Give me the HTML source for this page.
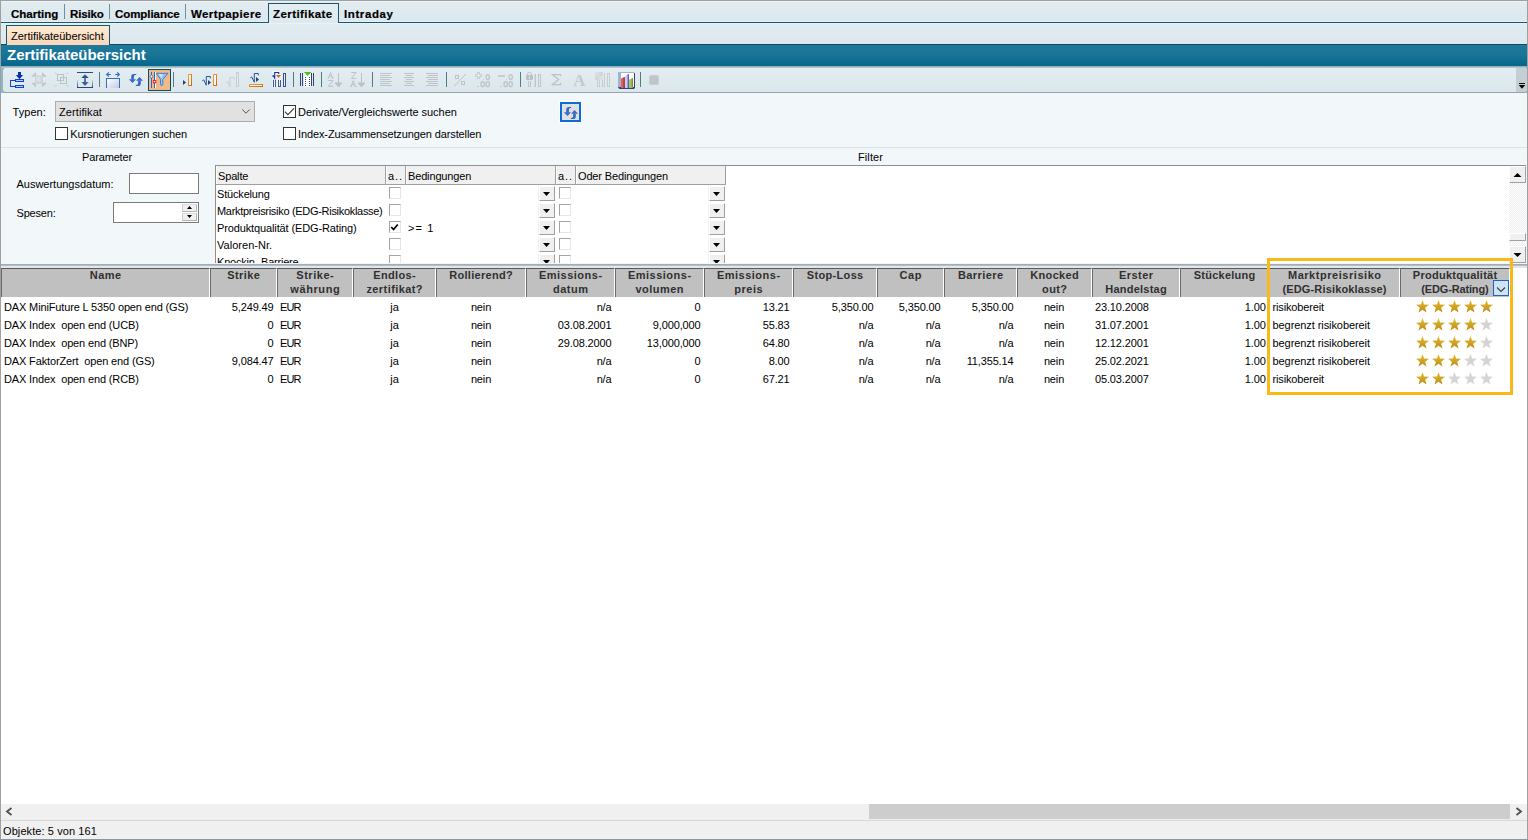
<!DOCTYPE html>
<html><head><meta charset="utf-8"><title>Zertifikateübersicht</title>
<style>
*{box-sizing:border-box;margin:0;padding:0}
html,body{width:1528px;height:840px;overflow:hidden;background:#fff}
body{font-family:"Liberation Sans",sans-serif;font-size:11px;color:#000;position:relative}
.a{position:absolute}
.t{position:absolute;white-space:pre;line-height:14px;height:14px}
/* top tab bar */
#tabbar{left:1px;top:1px;width:1526px;height:21px;background:linear-gradient(#e9f2f6 1px,#e2ecf1 1px,#dbe8ed 20px,#e9f2f6 20px)}
#tabline{left:1px;top:22px;width:1526px;height:1px;background:#17566e}
.tab{font-weight:bold;font-size:11.5px;top:7px;-webkit-text-stroke:.2px #000}
.tsep{width:1px;top:4px;height:15px;background:#6f8f9e}
#subbar{left:1px;top:23px;width:1526px;height:22px;background:linear-gradient(#e9f2f6 1px,#e1ecf1 1px,#dce8ed)}
#subtab{left:6px;top:25px;width:104px;height:20px;border:1px solid #17566e;border-bottom:none;background:linear-gradient(#fdecd4,#f8d6ba)}
#title{left:1px;top:45px;width:1526px;height:21px;background:linear-gradient(#20799a,#1a7596 45%,#05678b)}
#title .t{left:6px;top:1px;letter-spacing:-.03px;font-size:15px;font-weight:bold;color:#fff;line-height:18px;height:18px}
#tbtop{left:1px;top:66px;width:1526px;height:27px;background:linear-gradient(#a0a9ad 1px,#a3c9d6 1px,#a3c9d6 2px,#8bb7c6 2px)}
#toolbar{left:3px;top:68px;width:1524px;height:24px;background:linear-gradient(#e3edf2,#dbe7ec);border-radius:3px}
#tbbot{left:5px;top:92px;width:1520px;height:1px;background:#98a5ab}
#form{left:1px;top:93px;width:1526px;height:172px;background:#f2f7fa}
#hsep{left:1px;top:147px;width:1526px;height:1px;background:#dde2e5}
.ui{font-size:11px;letter-spacing:-.15px}
.cb{width:13px;height:13px;border:1px solid #333;background:#fff}
.fh{top:166px;height:19px;background:#f0f0f0;box-shadow:inset 1px 0 0 #fff;border-right:1px solid #a0a0a0;border-bottom:1px solid #a0a0a0;padding:3px 0 0 2px;white-space:pre;line-height:14px;overflow:hidden}
.fcb{width:12px;height:12px;background:#fff;border:1px solid #e6e6e6;border-top-color:#a3a3a3;border-left-color:#a3a3a3}
.fdd{width:16px;height:15px;background:#f0f0f0;border-right:1px solid #a0a0a0;border-bottom:1px solid #a0a0a0;border-top:1px solid #fff;border-left:1px solid #fff;box-shadow:-1px 0 0 #f0f0f0}
.fdd:after{content:"";position:absolute;left:3px;top:5px;width:7px;height:4px;background:#000;clip-path:polygon(0 0,100% 0,50% 100%)}
.sbb{width:17px;height:17px;background:#f0f0f0;border-right:1px solid #a0a0a0;border-bottom:1px solid #a0a0a0;border-top:1px solid #fff;border-left:1px solid #fff}
/* borders */
#bl{left:0;top:0;width:1px;height:840px;background:#a0a0a0}
#br{left:1527px;top:0;width:1px;height:840px;background:#a0a0a0}
#bt{left:0;top:0;width:1528px;height:1px;background:#a0a0a0}
#bb{left:0;top:839px;width:1528px;height:1px;background:#8a979e}
/* grid */
#grid{left:1px;top:268px;width:1526px;height:536px;background:#fff}
.hd{position:absolute;top:268px;height:29px;background:#c0c0c0;border-left:1px solid #6a6a6a;border-top:1px solid #5a5a5a;border-right:1px solid #fff;font-weight:bold;font-size:11px;color:#303030;text-align:center;line-height:14px;white-space:pre}.hd span{position:relative;top:-.8px}
.r{position:absolute;left:0;width:1528px;height:18px;font-size:11px;letter-spacing:-.14px}
.r span{position:absolute;top:2px;white-space:pre;line-height:14px}
#hscroll{left:1px;top:804px;width:1526px;height:16px;background:#f0f0f0}
#hthumb{left:869px;top:804px;width:641px;height:15px;background:#cdcdcd}
#status{left:1px;top:820px;width:1526px;height:19px;background:#f0f0f0;border-top:1px solid #d7d7d7}
</style></head><body>
<div class="a" id="tabbar"></div>
<div class="a" id="tabline"></div>
<div class="a" id="subbar"></div>
<div class="a" style="left:1px;top:44px;width:1526px;height:1px;background:#0e4c62"></div><div class="a" id="subtab"></div>
<div class="a" id="title"><span class="t">Zertifikateübersicht</span></div>
<div class="a" id="tbtop"></div>
<div class="a" id="toolbar"></div>
<div class="a" id="tbbot"></div>
<div class="a" id="form"></div>
<div class="a" id="hsep"></div>
<div class="a" id="grid"></div>
<div class="a" id="hscroll"></div>
<div class="a" id="hthumb"></div>
<div class="a" id="status"></div>
<div class="a tsep" style="left:64px"></div><div class="a tsep" style="left:109px"></div><div class="a tsep" style="left:185px"></div>
<div class="a" style="left:268px;top:3px;width:71px;height:20px;border:1px solid #17566e;border-bottom:none;background:linear-gradient(#e3edf2,#dde9ee)"></div>
<span class="t tab" style="left:11px">Charting</span>
<span class="t tab" style="left:70px;letter-spacing:-.17px">Risiko</span>
<span class="t tab" style="left:115px;letter-spacing:-.06px">Compliance</span>
<span class="t tab" style="left:191px;letter-spacing:.39px">Wertpapiere</span>
<span class="t tab" style="left:273px;letter-spacing:.43px">Zertifikate</span>
<span class="t tab" style="left:344px;letter-spacing:.6px">Intraday</span>
<span class="t ui" style="left:11px;top:29px;letter-spacing:-0.01px">Zertifikateübersicht</span>
<!--TABS-->
<svg class="a" style="left:0;top:66px" width="700" height="28" viewBox="0 66 700 28" shape-rendering="crispEdges">
<defs>
<linearGradient id="gU" x1="0" y1="0" x2="0" y2="1"><stop offset="0" stop-color="#c4d6ff"/><stop offset="1" stop-color="#2b4676"/></linearGradient>
<linearGradient id="gB" x1="0" y1="0" x2="1" y2="1"><stop offset="0" stop-color="#ffffff"/><stop offset="1" stop-color="#c6cae0"/></linearGradient>
<linearGradient id="gO" x1="0" y1="0" x2="1" y2="1"><stop offset="0" stop-color="#ffa53a"/><stop offset="1" stop-color="#c96300"/></linearGradient>
<linearGradient id="gA" x1="0" y1="0" x2="0" y2="1"><stop offset="0" stop-color="#3b6ea8"/><stop offset="1" stop-color="#24457a"/></linearGradient>
</defs>
<!-- separators -->
<g fill="#537b8b"><rect x="99" y="72" width="1" height="15"/><rect x="173" y="72" width="1" height="15"/><rect x="293" y="72" width="1" height="15"/><rect x="321" y="72" width="1" height="15"/><rect x="372" y="72" width="1" height="15"/><rect x="446" y="72" width="1" height="15"/><rect x="520" y="72" width="1" height="15"/><rect x="640" y="72" width="1" height="15"/></g>
<!-- 1 -->
<g fill="#0c2fa8"><rect x="18" y="72" width="3" height="4"/><polygon points="15.9,75 23.1,75 19.5,79.2" shape-rendering="geometricPrecision"/></g>
<g fill="#1440c4"><rect x="15" y="79" width="9" height="3"/><rect x="15" y="85" width="9" height="3"/><rect x="10" y="80" width="1" height="7"/><rect x="10" y="80" width="5" height="1"/><rect x="10" y="86" width="5" height="1"/></g>
<g fill="#a6d4ff"><rect x="16" y="80" width="7" height="1"/><rect x="16" y="86" width="7" height="1"/></g>
<!-- 2 disabled -->
<g fill="#c0c7cb" shape-rendering="geometricPrecision"><polygon points="31,76.8 36,72 36,76.8"/><polygon points="47,76.8 42,72 42,76.8"/><polygon points="31,82.7 36,87.5 36,82.7"/><polygon points="47,82.7 42,87.5 42,82.7"/><rect x="35" y="75.5" width="8" height="8.5" fill="#cfd5d8"/><rect x="36.5" y="77" width="4" height="4.5" fill="#dde2e5"/></g>
<!-- 3 disabled -->
<g fill="none" stroke="#bac2c6" stroke-width="1"><rect x="57.5" y="74.5" width="6" height="6"/><rect x="60.5" y="77.5" width="6" height="6"/></g>
<g stroke="#b8c0c4" stroke-width="1" shape-rendering="geometricPrecision"><line x1="55" y1="72.5" x2="56.5" y2="74"/><line x1="68" y1="72.5" x2="66.5" y2="74"/><line x1="55" y1="86.5" x2="56.5" y2="85"/><line x1="68" y1="86.5" x2="66.5" y2="85"/></g>
<!-- 4 -->
<rect x="77" y="72" width="16" height="1" fill="#2d4a7a"/>
<rect x="77" y="80" width="1" height="8" fill="url(#gU)"/><rect x="92" y="80" width="1" height="8" fill="url(#gU)"/><rect x="77" y="87" width="16" height="1" fill="#2b4676"/>
<g fill="url(#gA)" shape-rendering="geometricPrecision"><polygon points="81.3,78 85,74.2 88.7,78"/><rect x="84.2" y="77.5" width="1.6" height="5"/><polygon points="81.3,82 88.7,82 85,85.8"/></g>
<!-- 5 -->
<rect x="107" y="79" width="12" height="9" fill="url(#gB)"/><g fill="#2f6fc6"><rect x="106" y="78" width="14" height="1"/><rect x="106" y="78" width="1" height="10"/><rect x="119" y="78" width="1" height="10"/></g>
<g stroke="#2f6fc6" stroke-width="1.2" fill="none" shape-rendering="geometricPrecision"><path d="M108.8,72.4 L106.7,74.5 L108.8,76.6 M106.9,74.5 H110.8"/><path d="M117.2,72.4 L119.3,74.5 L117.2,76.6 M119.1,74.5 H115.2"/></g>
<!-- 6 refresh -->
<g id="refr" shape-rendering="geometricPrecision" fill="#3767c8"><path d="M136.2,74 h-2.4 c-1.7,0 -2.6,0.9 -2.6,2.6 v2.8 h2.7 v-2.4 c0,-1.3 0.5,-1.9 2.3,-1.9 z"/><polygon points="128.9,79.2 136,79.2 132.5,83.1"/><polygon points="136.1,80.8 143,80.8 139.5,76.9"/><path d="M135.8,86 h2.4 c1.7,0 2.6,-0.9 2.6,-2.6 v-2.8 h-2.7 v2.4 c0,1.3 -0.5,1.9 -2.3,1.9 z"/></g>
<!-- 7 pressed filter -->
<rect x="148.500" y="69.500" width="22" height="21" fill="#f0b98c" stroke="#0f4d62"/>
<rect x="151" y="72" width="1" height="16" fill="#2a68c8"/>
<rect x="154" y="72" width="1" height="16" fill="#2a68c8"/><rect x="155" y="72" width="1" height="16" fill="#fff"/>
<g shape-rendering="geometricPrecision"><circle cx="151.500" cy="76.500" r="1.400" fill="#fff" stroke="#2a68c8" stroke-width=".9"/>
<rect x="153.400" y="80.400" width="2.400" height="2.400" fill="#fff" stroke="#ee1c1c" stroke-width="1"/>
<polygon points="156.300,73.300 168,73.300 162.800,79.500 162.800,84.300 161.600,86 160.500,84.300 160.500,79.500" fill="#8fc8f3" stroke="#2a68c8" stroke-width=".8"/><polygon points="158.500,74 163,74 161.500,78" fill="#c6e4fb"/></g>
<!-- 8 -->
<polygon points="183,80 186,82.500 183,85" fill="#27406e" shape-rendering="geometricPrecision"/>
<g id="orect"><rect x="188" y="74" width="4" height="12" fill="url(#gO)"/><rect x="189" y="75" width="2" height="10" fill="#f4f6f8"/></g>
<!-- 9 -->
<path d="M202.300,80.800 l1.400,-.9 l2.600,5.300 V76.500 h4 v1.800" fill="none" stroke="#1d4c96" stroke-width=".95" shape-rendering="geometricPrecision"/>
<polygon points="208,80 211,82.500 208,85" fill="#27406e" shape-rendering="geometricPrecision"/>
<use href="#orect" x="25"/>
<!-- 10 disabled -->
<path d="M226.300,82.300 l1.400,-.8 l2.300,5 V77.500 h4.500 v2" fill="none" stroke="#c7cdd0" stroke-width="1" shape-rendering="geometricPrecision"/>
<rect x="236.500" y="72.500" width="2" height="14" fill="#e6ebee" stroke="#c5cbce"/>
<!-- 11 -->
<path d="M250.300,77.800 l1.400,-.9 l2.600,5.300 V73.500 h4 v1.800" fill="none" stroke="#1d4c96" stroke-width=".95" shape-rendering="geometricPrecision"/>
<polygon points="256,77 259,79.500 256,82" fill="#27406e" shape-rendering="geometricPrecision"/>
<rect x="249" y="84" width="14" height="3" fill="url(#gO)"/><rect x="250" y="85" width="12" height="1" fill="#fdf3e6"/>
<!-- 12 -->
<rect x="272" y="71" width="10" height="16" fill="#eef2f6"/>
<path d="M272.300,76.300 l1,-.6 l1.400,2.400 V72.500 h4 v1.500" fill="none" stroke="#1735a8" stroke-width="1.100" shape-rendering="geometricPrecision"/>
<polygon points="276,75 281,75 278.500,78" fill="#d96a10" shape-rendering="geometricPrecision"/>
<g fill="#3f5f9a"><rect x="273" y="80" width="1" height="7"/><rect x="275" y="80" width="1" height="7"/><rect x="278" y="80" width="1" height="7"/><rect x="280" y="80" width="1" height="7"/><rect x="278" y="86" width="3" height="1"/></g>
<rect x="283.500" y="73.500" width="2" height="13" fill="#eef2f8" stroke="#3a4f86"/>
<!-- 13 -->
<rect x="304" y="73" width="7" height="14" fill="#fff"/>
<g fill="#2c4376"><rect x="300" y="73" width="1" height="13"/><rect x="302" y="73" width="1" height="13"/><rect x="311" y="73" width="1" height="13"/><rect x="313" y="73" width="1" height="13"/>
<rect x="305" y="77" width="1" height="1"/><rect x="305" y="79" width="1" height="1"/><rect x="305" y="81" width="1" height="1"/><rect x="305" y="83" width="1" height="1"/><rect x="305" y="85" width="1" height="1"/><rect x="309" y="77" width="1" height="1"/><rect x="309" y="79" width="1" height="1"/><rect x="309" y="81" width="1" height="1"/><rect x="309" y="83" width="1" height="1"/><rect x="309" y="85" width="1" height="1"/></g>
<polygon points="304,72 311.500,72 307.700,76" fill="#4cc417" shape-rendering="geometricPrecision"/>
<!-- 14 AZ -->
<g fill="none" stroke="#bac2c6" stroke-width="1" shape-rendering="geometricPrecision"><path d="M327.500,78 h2 M331.500,78 h2.200 M328.500,78 l2.100,-5.500 l2.100,5.500 M329.300,76.200 h2.600"/><path d="M328.300,80.500 h4.800 l-4.800,5.800 h4.800"/><path d="M338.500,73 v10"/><polygon points="335.200,83 341.800,83 338.500,87" fill="#bac2c6"/></g>
<!-- 15 ZA -->
<g fill="none" stroke="#bac2c6" stroke-width="1" shape-rendering="geometricPrecision"><path d="M351.300,72.600 h4.800 l-4.800,5.800 h4.800"/><path d="M350.200,86.300 h2 M354.200,86.300 h2.200 M351.200,86.300 l2.100,-5.500 l2.100,5.500 M352,84.500 h2.600"/><path d="M361.500,73 v10"/><polygon points="358.200,83 364.800,83 361.500,87" fill="#bac2c6"/></g>
<!-- 16-18 align -->
<g fill="#bcc4c8"><rect x="380" y="73" width="12" height="1"/><rect x="380" y="75" width="10" height="1"/><rect x="380" y="77" width="12" height="1"/><rect x="380" y="79" width="10" height="1"/><rect x="380" y="81" width="12" height="1"/><rect x="380" y="83" width="10" height="1"/><rect x="380" y="85" width="12" height="1"/>
<rect x="404" y="73" width="10" height="1"/><rect x="406" y="75" width="6" height="1"/><rect x="404" y="77" width="10" height="1"/><rect x="406" y="79" width="6" height="1"/><rect x="404" y="81" width="10" height="1"/><rect x="406" y="83" width="6" height="1"/><rect x="404" y="85" width="10" height="1"/>
<rect x="426" y="73" width="12" height="1"/><rect x="428" y="75" width="10" height="1"/><rect x="426" y="77" width="12" height="1"/><rect x="428" y="79" width="10" height="1"/><rect x="426" y="81" width="12" height="1"/><rect x="428" y="83" width="10" height="1"/><rect x="426" y="85" width="12" height="1"/></g>
<!-- 19 % -->
<g fill="none" stroke="#bac2c6" stroke-width="1"><rect x="455.500" y="75.500" width="3" height="3"/><rect x="461.500" y="81.500" width="3" height="3"/><line x1="466" y1="74" x2="454.300" y2="86" shape-rendering="geometricPrecision"/></g>
<!-- 20/21 decimals -->
<g fill="none" stroke="#c3cacd" stroke-width="1" shape-rendering="geometricPrecision"><path d="M477.5,72.5 h2 v2 h2 v2 h-2 v2 h-2 v-2 h-2 v-2 h2z"/></g>
<rect x="498" y="75" width="7" height="2" fill="#c6cdd0"/>
<g fill="none" stroke="#c0c7cb" stroke-width="1.45" shape-rendering="geometricPrecision"><ellipse cx="487.7" cy="77" rx="1.7" ry="2.4"/><ellipse cx="482.7" cy="84.2" rx="1.7" ry="2.4"/><ellipse cx="487.7" cy="84.2" rx="1.7" ry="2.4"/><ellipse cx="510.7" cy="77" rx="1.7" ry="2.4"/><ellipse cx="505.7" cy="84.2" rx="1.7" ry="2.4"/><ellipse cx="510.7" cy="84.2" rx="1.7" ry="2.4"/></g><g fill="#c3cacd"><rect x="482.5" y="78.5" width="1.5" height="1.5"/><rect x="477.3" y="85.7" width="1.5" height="1.5"/><rect x="505.5" y="78.5" width="1.5" height="1.5"/><rect x="500.3" y="85.7" width="1.5" height="1.5"/></g>
<!-- 22 lock cols -->
<g fill="none" stroke="#c0c7cb" stroke-width="1"><path d="M527.6,75.5 v-1.6 q0,-1.7 1.9,-1.7 q1.900,0 1.9,1.7 v1.6" shape-rendering="geometricPrecision"/><rect x="526" y="75" width="7" height="5" rx="1.300" fill="#b8c0c4" stroke="none" shape-rendering="geometricPrecision"/><rect x="529" y="76" width="1" height="3" fill="#dde5ea" stroke="none"/><path d="M528.5,81 v5.5 h2 v-5.5"/><path d="M534.5,74 v12.5" stroke="#d4dbdf"/><path d="M535.5,74 v12.5 M534,86.5 h2"/><rect x="538.5" y="74.5" width="2" height="12" fill="#e0e8ec"/></g>
<!-- 23 sigma -->
<path d="M560.6,76.3 V74.5 H552.4 l6.2,5 l-6.200,5 H560.6 v-1.8" fill="none" stroke="#bac2c6" stroke-width="1.25" shape-rendering="geometricPrecision"/>
<!-- 24 A -->
<text x="573.300" y="86" font-family="Liberation Serif" font-weight="bold" font-size="17" fill="#c3cacd" shape-rendering="geometricPrecision">A</text>
<!-- 25 -->
<rect x="595" y="72" width="8" height="8" fill="#d0d6d9"/><rect x="595" y="72" width="4" height="4" fill="#d9dee1"/><rect x="599" y="76" width="4" height="4" fill="#dbe0e3"/>
<g fill="none" stroke="#c6cdd0" stroke-width="1"><path d="M597.5,80 v6.5 h2 v-6.5"/><path d="M602.5,80 v6.5 h2 v-13.5"/><rect x="607.5" y="73.5" width="2" height="13" fill="#e4e9ec"/></g>
<!-- 26 chart -->
<rect x="621" y="73" width="13" height="15" fill="#fff"/>
<rect x="618" y="72" width="3" height="16" fill="#a5b2cd"/><rect x="618" y="72" width="16" height="1" fill="#a5b2cd"/><rect x="634" y="73" width="1" height="15" fill="#2c447a"/>
<polygon points="618,87 635,87 634.2,89 619.4,89" fill="#2c447a" shape-rendering="geometricPrecision"/>
<g shape-rendering="geometricPrecision"><polygon points="621,78.6 624.7,77 624.7,88 621,88" fill="#d96262"/><polygon points="623.5,77.5 624.8,76.9 624.8,88 623.5,88" fill="#ad2a2a"/>
<polygon points="625.1,75.8 628.8,74 628.8,88 625.1,88" fill="#c6cef1"/><polygon points="627.6,74.6 628.900,73.9 628.9,88 627.6,88" fill="#4659c6"/>
<polygon points="629.1,79.7 632.9,78 632.9,88 629.1,88" fill="#aac254"/><polygon points="631.7,78.5 633,77.9 633,88 631.7,88" fill="#7b962a"/>
</g>
<!-- 27 -->
<rect x="649.3" y="75.3" width="9.4" height="9.4" fill="#bec6c9" rx="1.2" shape-rendering="geometricPrecision" style="filter:blur(.75px)"/>
</svg>
<div class="a" style="left:1516px;top:68px;width:11px;height:24px;background:#c3cfd4;border-radius:0 4px 4px 0"></div>
<svg class="a" style="left:1518px;top:82px" width="8" height="8" viewBox="0 0 8 8"><rect x="1" y="1" width="6" height="1" fill="#000" shape-rendering="crispEdges"/><polygon points="0.8,3 7.2,3 4,6.8" fill="#000"/></svg>
<!--TOOLBAR-->
<span class="t ui" style="left:12.500px;top:105px;letter-spacing:0.062px">Typen:</span>
<div class="a" style="left:55px;top:101px;width:200px;height:21px;background:#e1e1e1;border:1px solid #adadad"></div>
<span class="t ui" style="left:59px;top:105px;letter-spacing:0.08px">Zertifikat</span>
<svg class="a" style="left:241px;top:108px" width="10" height="7" viewBox="0 0 10 7"><path d="M1.3,1.5 L5,5.2 L8.7,1.5" fill="none" stroke="#505050" stroke-width="1"/></svg>
<div class="a cb" style="left:55px;top:127px"></div>
<span class="t ui" style="left:70.300px;top:127px;letter-spacing:-0.120px">Kursnotierungen suchen</span>
<div class="a cb" style="left:283px;top:105px"></div>
<svg class="a" style="left:283px;top:105px" width="13" height="13" viewBox="0 0 13 13"><path d="M1.9,6.6 L4.9,9.6 L11,3.3" fill="none" stroke="#3a3a3a" stroke-width="1.1"/></svg>
<span class="t ui" style="left:298px;top:105px;letter-spacing:-0.045px">Derivate/Vergleichswerte suchen</span>
<div class="a cb" style="left:283px;top:127px"></div>
<span class="t ui" style="left:298px;top:127px;letter-spacing:-0.112px">Index-Zusammensetzungen darstellen</span>
<div class="a" style="left:560px;top:102px;width:21px;height:20px;border:2px solid #0c6dd6;background:#e1e1e1;box-shadow:0 0 0 1px #fbfdfe"></div>
<svg class="a" style="left:562px;top:105px" width="17" height="16" viewBox="127 72 17 16"><g fill="#3767c8"><path d="M136.2,74 h-2.4 c-1.7,0 -2.6,0.9 -2.6,2.6 v2.8 h2.7 v-2.4 c0,-1.3 0.5,-1.9 2.3,-1.9 z"/><polygon points="128.9,79.2 136,79.2 132.5,83.1"/><polygon points="136.1,80.8 143,80.8 139.5,76.9"/><path d="M135.8,86 h2.4 c1.7,0 2.6,-0.9 2.6,-2.6 v-2.8 h-2.7 v2.4 c0,1.3 -0.5,1.9 -2.3,1.9 z"/></g></svg>
<span class="t ui" style="left:82px;top:150px;letter-spacing:-0.151px">Parameter</span>
<span class="t ui" style="left:858px;top:150px;letter-spacing:0.1px">Filter</span>
<span class="t ui" style="left:16.500px;top:177px;letter-spacing:-0.013px">Auswertungsdatum:</span>
<div class="a" style="left:129px;top:173px;width:70px;height:21px;background:#fff;border:1px solid #7a7a7a"></div>
<span class="t ui" style="left:16.500px;top:206px;letter-spacing:-0.197px">Spesen:</span>
<div class="a" style="left:113px;top:202px;width:86px;height:21px;background:#fff;border:1px solid #7a7a7a"></div>
<div class="a" style="left:182px;top:204px;width:15px;height:8px;background:#f0f0f0;border:1px solid #b4b4b4;border-top-color:#dcdcdc;border-left-color:#d0d0d0"></div>
<div class="a" style="left:182px;top:213px;width:15px;height:8px;background:#f0f0f0;border:1px solid #b4b4b4;border-top-color:#dcdcdc;border-left-color:#d0d0d0"></div>
<svg class="a" style="left:186px;top:206px" width="7" height="14" viewBox="0 0 7 14"><polygon points="1,3 6,3 3.5,0" fill="#000"/><polygon points="1,9 6,9 3.5,12" fill="#000"/></svg>
<!--FORM-->
<div class="a" style="left:0;top:0;width:1528px;height:263px;overflow:hidden">
<div class="a" style="left:215px;top:165px;width:1311px;height:1px;background:#8f8f8f"></div><div class="a" style="left:215px;top:166px;width:1294px;height:97px;background:#fff;border-left:1px solid #8f8f8f"></div>
<div class="a fh" style="left:216px;width:170px"><span class="ui">Spalte</span></div>
<div class="a fh" style="left:386px;width:20px"><span class="ui" style="letter-spacing:.9px">a..</span></div>
<div class="a fh" style="left:406px;width:150px"><span class="ui">Bedingungen</span></div>
<div class="a fh" style="left:556px;width:20px"><span class="ui" style="letter-spacing:.9px">a..</span></div>
<div class="a fh" style="left:576px;width:150px"><span class="ui">Oder Bedingungen</span></div>
<span class="t ui" style="left:217px;top:187px;letter-spacing:-0.174px">Stückelung</span>
<div class="a fcb" style="left:389px;top:187px"></div><div class="a fcb" style="left:559px;top:187px"></div>
<div class="a fdd" style="left:539px;top:186px"></div><div class="a fdd" style="left:709px;top:186px"></div>
<span class="t ui" style="left:217px;top:204px;letter-spacing:-0.301px">Marktpreisrisiko (EDG-Risikoklasse)</span>
<div class="a fcb" style="left:389px;top:204px"></div><div class="a fcb" style="left:559px;top:204px"></div>
<div class="a fdd" style="left:539px;top:203px"></div><div class="a fdd" style="left:709px;top:203px"></div>
<span class="t ui" style="left:217px;top:221px;letter-spacing:-0.127px">Produktqualität (EDG-Rating)</span>
<div class="a fcb" style="left:389px;top:221px"></div><div class="a fcb" style="left:559px;top:221px"></div>
<div class="a fdd" style="left:539px;top:220px"></div><div class="a fdd" style="left:709px;top:220px"></div>
<span class="t ui" style="left:217px;top:238px;letter-spacing:0.034px">Valoren-Nr.</span>
<div class="a fcb" style="left:389px;top:238px"></div><div class="a fcb" style="left:559px;top:238px"></div>
<div class="a fdd" style="left:539px;top:237px"></div><div class="a fdd" style="left:709px;top:237px"></div>
<span class="t ui" style="left:217px;top:255px;letter-spacing:-0.205px">Knockin- Barriere</span>
<div class="a fcb" style="left:389px;top:255px"></div><div class="a fcb" style="left:559px;top:255px"></div>
<div class="a fdd" style="left:539px;top:254px"></div><div class="a fdd" style="left:709px;top:254px"></div>
<svg class="a" style="left:389px;top:222px" width="11" height="11" viewBox="0 0 11 11"><path d="M2.300,5 L4.500,7.500 L8.800,2.500" fill="none" stroke="#000" stroke-width="1.700"/></svg>
<span class="t ui" style="left:408px;top:221px;letter-spacing:1.1px">&gt;= 1</span>
</div>
<div class="a" style="left:1px;top:263px;width:1526px;height:1px;background:#f4f7f9"></div><div class="a" style="left:1px;top:264px;width:1526px;height:2px;background:linear-gradient(#9ea5a9,#bcc5ca)"></div><div class="a" style="left:1px;top:266px;width:1526px;height:2px;background:#dfe8ee"></div>
<div class="a" style="left:1509px;top:166px;width:17px;height:97px;background:#f0f0f0;background-image:repeating-conic-gradient(#fff 0 25%,#ececec 0 50%);background-size:2px 2px"></div>
<div class="a sbb" style="left:1509px;top:166px"></div><div class="a sbb" style="left:1509px;top:246px"></div><div class="a sbb" style="left:1509px;top:233px;height:8px"></div>
<svg class="a" style="left:1513px;top:172px" width="9" height="6" viewBox="0 0 9 6"><polygon points="0.500,5 8.500,5 4.500,1" fill="#000"/></svg>
<svg class="a" style="left:1513px;top:252px" width="9" height="6" viewBox="0 0 9 6"><polygon points="0.500,1 8.500,1 4.500,5" fill="#000"/></svg>
<!--FILTER-->
<div class="hd" style="left:1px;width:209px"><span style="letter-spacing:0.510px;margin-right:-0.510px">Name</span><br></div>
<div class="hd" style="left:210px;width:67px"><span style="letter-spacing:0.424px;margin-right:-0.424px">Strike</span><br></div>
<div class="hd" style="left:277px;width:76px"><span style="letter-spacing:0.542px;margin-right:-0.542px">Strike-</span><br><span style="letter-spacing:0.593px;margin-right:-0.593px">währung</span><br></div>
<div class="hd" style="left:353px;width:83px"><span style="letter-spacing:0.377px;margin-right:-0.377px">Endlos-</span><br><span style="letter-spacing:0.423px;margin-right:-0.423px">zertifikat?</span><br></div>
<div class="hd" style="left:436px;width:90px"><span style="letter-spacing:0.298px;margin-right:-0.298px">Rollierend?</span><br></div>
<div class="hd" style="left:526px;width:89px"><span style="letter-spacing:0.501px;margin-right:-0.501px">Emissions-</span><br><span style="letter-spacing:0.550px;margin-right:-0.550px">datum</span><br></div>
<div class="hd" style="left:615px;width:89px"><span style="letter-spacing:0.501px;margin-right:-0.501px">Emissions-</span><br><span style="letter-spacing:0.462px;margin-right:-0.462px">volumen</span><br></div>
<div class="hd" style="left:704px;width:89px"><span style="letter-spacing:0.501px;margin-right:-0.501px">Emissions-</span><br><span style="letter-spacing:0.550px;margin-right:-0.550px">preis</span><br></div>
<div class="hd" style="left:793px;width:84px"><span style="letter-spacing:0.340px;margin-right:-0.340px">Stop-Loss</span><br></div>
<div class="hd" style="left:877px;width:67px"><span style="letter-spacing:0.660px;margin-right:-0.660px">Cap</span><br></div>
<div class="hd" style="left:944px;width:73px"><span style="letter-spacing:0.429px;margin-right:-0.429px">Barriere</span><br></div>
<div class="hd" style="left:1017px;width:75px"><span style="letter-spacing:0.322px;margin-right:-0.322px">Knocked</span><br><span style="letter-spacing:0.323px;margin-right:-0.323px">out?</span><br></div>
<div class="hd" style="left:1092px;width:88px"><span style="letter-spacing:0.480px;margin-right:-0.480px">Erster</span><br><span style="letter-spacing:0.233px;margin-right:-0.233px">Handelstag</span><br></div>
<div class="hd" style="left:1180px;width:89px"><span style="letter-spacing:0.256px;margin-right:-0.256px">Stückelung</span><br></div>
<div class="hd" style="left:1269px;width:131px"><span style="letter-spacing:0.541px;margin-right:-0.541px">Marktpreisrisiko</span><br><span style="letter-spacing:0.154px;margin-right:-0.154px">(EDG-Risikoklasse)</span><br></div>
<div class="hd" style="left:1400px;width:110px"><span style="letter-spacing:0.259px;margin-right:-0.259px">Produktqualität</span><br><span style="letter-spacing:-0.159px;margin-right:0.159px">(EDG-Rating)</span><br></div>
<div class="a" style="left:1493px;top:280px;width:16px;height:16px;background:#cde4f7;border:1px solid #1a66b8"></div>
<svg class="a" style="left:1496px;top:286px" width="10" height="7" viewBox="0 0 10 7"><path d="M1,1.500 L5,5.500 L9,1.500" fill="none" stroke="#404040" stroke-width="1.100"/></svg>
<!--HEADER-->
<svg width="0" height="0" style="position:absolute"><defs><linearGradient id="gs" x1="0" y1="0" x2="0" y2="1"><stop offset="0" stop-color="#e9bf3c"/><stop offset="1" stop-color="#bb8a0e"/></linearGradient><path id="st" d="M6.5,0 L8.1,4.6 L13,4.8 L9.1,7.8 L10.5,12.5 L6.5,9.7 L2.5,12.5 L3.9,7.8 L0,4.8 L4.9,4.6 Z"/></defs></svg>
<div class="r" style="top:298px"><span style="left:4px">DAX MiniFuture L 5350 open end (GS)</span><span style="right:1254.5px">5,249.49</span><span style="left:280px;letter-spacing:-.85px">EUR</span><span style="left:394.5px;transform:translateX(-50%)">ja</span><span style="left:481px;transform:translateX(-50%)">nein</span><span style="right:916.5px">n/a</span><span style="right:827.5px">0</span><span style="right:738.5px">13.21</span><span style="right:654.5px">5,350.00</span><span style="right:587.5px">5,350.00</span><span style="right:514.5px">5,350.00</span><span style="left:1054px;transform:translateX(-50%)">nein</span><span style="left:1095px">23.10.2008</span><span style="right:262.3px">1.00</span><span style="left:1272.500px;letter-spacing:-.14px">risikobereit</span></div>
<svg class="a" style="left:1416px;top:300px" width="78" height="14" viewBox="0 0 78 14"><use href="#st" x="0" fill="url(#gs)"/><use href="#st" x="16" fill="url(#gs)"/><use href="#st" x="32" fill="url(#gs)"/><use href="#st" x="48" fill="url(#gs)"/><use href="#st" x="64" fill="url(#gs)"/></svg>
<div class="r" style="top:316px"><span style="left:4px">DAX Index  open end (UCB)</span><span style="right:1254.5px">0</span><span style="left:280px;letter-spacing:-.85px">EUR</span><span style="left:394.5px;transform:translateX(-50%)">ja</span><span style="left:481px;transform:translateX(-50%)">nein</span><span style="right:916.5px">03.08.2001</span><span style="right:827.5px">9,000,000</span><span style="right:738.5px">55.83</span><span style="right:654.5px">n/a</span><span style="right:587.5px">n/a</span><span style="right:514.5px">n/a</span><span style="left:1054px;transform:translateX(-50%)">nein</span><span style="left:1095px">31.07.2001</span><span style="right:262.3px">1.00</span><span style="left:1272.500px;letter-spacing:-.075px">begrenzt risikobereit</span></div>
<svg class="a" style="left:1416px;top:318px" width="78" height="14" viewBox="0 0 78 14"><use href="#st" x="0" fill="url(#gs)"/><use href="#st" x="16" fill="url(#gs)"/><use href="#st" x="32" fill="url(#gs)"/><use href="#st" x="48" fill="url(#gs)"/><use href="#st" x="64" fill="#d4d4d4"/></svg>
<div class="r" style="top:334px"><span style="left:4px">DAX Index  open end (BNP)</span><span style="right:1254.5px">0</span><span style="left:280px;letter-spacing:-.85px">EUR</span><span style="left:394.5px;transform:translateX(-50%)">ja</span><span style="left:481px;transform:translateX(-50%)">nein</span><span style="right:916.5px">29.08.2000</span><span style="right:827.5px">13,000,000</span><span style="right:738.5px">64.80</span><span style="right:654.5px">n/a</span><span style="right:587.5px">n/a</span><span style="right:514.5px">n/a</span><span style="left:1054px;transform:translateX(-50%)">nein</span><span style="left:1095px">12.12.2001</span><span style="right:262.3px">1.00</span><span style="left:1272.500px;letter-spacing:-.075px">begrenzt risikobereit</span></div>
<svg class="a" style="left:1416px;top:336px" width="78" height="14" viewBox="0 0 78 14"><use href="#st" x="0" fill="url(#gs)"/><use href="#st" x="16" fill="url(#gs)"/><use href="#st" x="32" fill="url(#gs)"/><use href="#st" x="48" fill="url(#gs)"/><use href="#st" x="64" fill="#d4d4d4"/></svg>
<div class="r" style="top:352px"><span style="left:4px">DAX FaktorZert  open end (GS)</span><span style="right:1254.5px">9,084.47</span><span style="left:280px;letter-spacing:-.85px">EUR</span><span style="left:394.5px;transform:translateX(-50%)">ja</span><span style="left:481px;transform:translateX(-50%)">nein</span><span style="right:916.5px">n/a</span><span style="right:827.5px">0</span><span style="right:738.5px">8.00</span><span style="right:654.5px">n/a</span><span style="right:587.5px">n/a</span><span style="right:514.5px">11,355.14</span><span style="left:1054px;transform:translateX(-50%)">nein</span><span style="left:1095px">25.02.2021</span><span style="right:262.3px">1.00</span><span style="left:1272.500px;letter-spacing:-.075px">begrenzt risikobereit</span></div>
<svg class="a" style="left:1416px;top:354px" width="78" height="14" viewBox="0 0 78 14"><use href="#st" x="0" fill="url(#gs)"/><use href="#st" x="16" fill="url(#gs)"/><use href="#st" x="32" fill="url(#gs)"/><use href="#st" x="48" fill="#d4d4d4"/><use href="#st" x="64" fill="#d4d4d4"/></svg>
<div class="r" style="top:370px"><span style="left:4px">DAX Index  open end (RCB)</span><span style="right:1254.5px">0</span><span style="left:280px;letter-spacing:-.85px">EUR</span><span style="left:394.5px;transform:translateX(-50%)">ja</span><span style="left:481px;transform:translateX(-50%)">nein</span><span style="right:916.5px">n/a</span><span style="right:827.5px">0</span><span style="right:738.5px">67.21</span><span style="right:654.5px">n/a</span><span style="right:587.5px">n/a</span><span style="right:514.5px">n/a</span><span style="left:1054px;transform:translateX(-50%)">nein</span><span style="left:1095px">05.03.2007</span><span style="right:262.3px">1.00</span><span style="left:1272.500px;letter-spacing:-.14px">risikobereit</span></div>
<svg class="a" style="left:1416px;top:372px" width="78" height="14" viewBox="0 0 78 14"><use href="#st" x="0" fill="url(#gs)"/><use href="#st" x="16" fill="url(#gs)"/><use href="#st" x="32" fill="#d4d4d4"/><use href="#st" x="48" fill="#d4d4d4"/><use href="#st" x="64" fill="#d4d4d4"/></svg>
<div class="a" style="left:1267px;top:258px;width:246px;height:137px;border:3px solid #fbb917"></div>
<!--ROWS-->
<svg class="a" style="left:5px;top:807px" width="8" height="9" viewBox="0 0 8 9"><path d="M6.500,1 L2,4.500 L6.500,8" fill="none" stroke="#505050" stroke-width="1.800"/></svg>
<svg class="a" style="left:1515px;top:807px" width="8" height="9" viewBox="0 0 8 9"><path d="M1.500,1 L6,4.500 L1.500,8" fill="none" stroke="#505050" stroke-width="1.800"/></svg>
<span class="t ui" style="left:3px;top:824px;letter-spacing:0.087px">Objekte: 5 von 161</span>
<!--BOTTOM-->
<div class="a" id="bl"></div><div class="a" id="br"></div><div class="a" id="bt"></div><div class="a" id="bb"></div>
</body></html>
